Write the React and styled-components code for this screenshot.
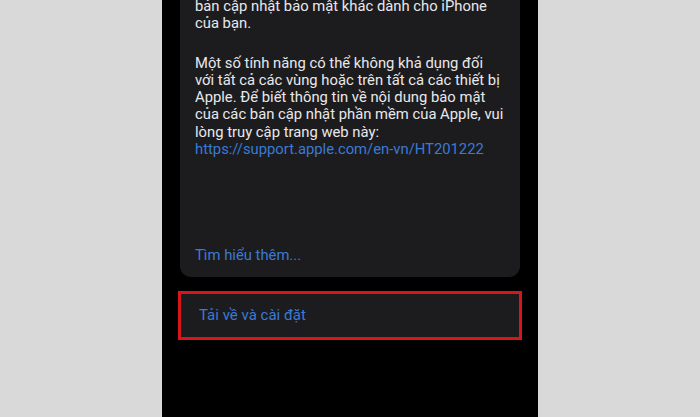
import React from 'react';
import styled, { createGlobalStyle } from 'styled-components';

const GlobalStyle = createGlobalStyle`
  html, body {
    margin: 0;
    padding: 0;
    background: #d9d9d9;
  }
  body {
    font-family: Roboto, "Noto Sans", "Liberation Sans", sans-serif;
  }
`;

// the phone screen in the middle of the grey page
const Screen = styled.div`
  width: 376px;
  height: 417px;
  margin-left: 162px;
  background: #000;
  overflow: hidden;
  display: flex;
  flex-direction: column;
`;

// the notes card, its top runs off the screen
const Card = styled.div`
  margin: -2px 18px 0;
  padding: 0 4px 12px 15px;
  background: #1c1c1e;
  border-radius: 0 0 11px 11px;
  display: flex;
  flex-direction: column;
`;

const Paragraph = styled.p`
  margin: 0 0 ${(p) => p.$gap || 0}px;
  font-size: 14.8px;
  line-height: 17.3px;
  color: #e8e8ec;
`;

const Line = styled.span`
  display: block;
  white-space: nowrap;
`;

const Link = styled.a`
  display: block;
  white-space: nowrap;
  color: #3a7ad6;
  text-decoration: none;
  font-size: 14.8px;
  line-height: 17.3px;
  margin-top: ${(p) => p.$top || 0}px;
`;

// the install row, outlined in red in the screenshot
const ActionRow = styled.div`
  margin: 14px 16px 0;
  height: 49px;
  box-sizing: border-box;
  border: 3px solid #d8141c;
  background: #1c1c1e;
  display: flex;
  align-items: center;
  padding-left: 18px;
`;

const ActionText = styled.span`
  color: #3a7ad6;
  font-size: 15px;
`;

const App = () => {
  return (
    <>
      <GlobalStyle />
      <Screen>
        <Card>
          <Paragraph $gap={22}>
            <Line>bản cập nhật bảo mật khác dành cho iPhone</Line>
            <Line>của bạn.</Line>
          </Paragraph>
          <Paragraph>
            <Line>Một số tính năng có thể không khả dụng đối</Line>
            <Line>với tất cả các vùng hoặc trên tất cả các thiết bị</Line>
            <Line>Apple. Để biết thông tin về nội dung bảo mật</Line>
            <Line>của các bản cập nhật phần mềm của Apple, vui</Line>
            <Line>lòng truy cập trang web này:</Line>
          </Paragraph>
          <Link href="#">https://support.apple.com/en-vn/HT201222</Link>
          <Link href="#" $top={89}>Tìm hiểu thêm...</Link>
        </Card>
        <ActionRow>
          <ActionText>Tải về và cài đặt</ActionText>
        </ActionRow>
      </Screen>
    </>
  );
};

export default App;
